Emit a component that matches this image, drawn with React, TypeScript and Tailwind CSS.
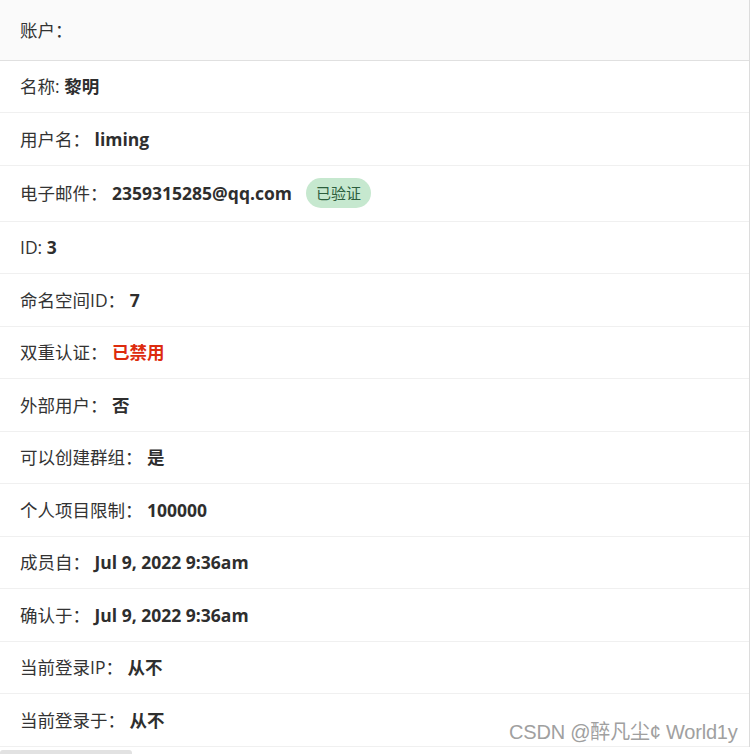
import React from "react";

const font = { fontFamily: '"Open Sans", "Noto Sans CJK SC", sans-serif' };

function Row({ label, children }: { label: string; children: React.ReactNode }) {
  return (
    <li className="flex items-center px-[20px] py-[12.625px] leading-[26.25px] border-b border-[#f0f0f0] text-[17.5px] text-[#333]">
      <span className="whitespace-pre">{label}</span>
      {children}
    </li>
  );
}

export default function App() {
  const v = "font-bold text-[#2e2e2e]";
  return (
    <div className="relative w-[751px] h-[754px] bg-white overflow-hidden" style={font}>
      <div className="w-[750px] border-r border-[#dcdcdc]">
        <div className="bg-[#fafafa] border-b border-[#e0e0e0] px-[20px] py-[16.625px] leading-[26.25px] text-[17.5px] text-[#333]">
          账户：
        </div>
        <ul>
          <Row label="名称: ">
            <span className={v}>黎明</span>
          </Row>
          <Row label="用户名： ">
            <span className={v}>liming</span>
          </Row>
          <li className="flex items-center px-[20px] py-[12.5px] border-b border-[#f0f0f0] text-[17.5px] text-[#333] leading-[26.25px]">
            <span className="whitespace-pre">电子邮件： </span>
            <span className={v}>2359315285@qq.com</span>
            <span className="ml-[14px] h-[30px] px-[10px] rounded-full bg-[#c6e8cf] text-[#2c5e3c] text-[15px] leading-[30px]">
              已验证
            </span>
          </li>
          <Row label="ID: ">
            <span className={v}>3</span>
          </Row>
          <Row label="命名空间ID： ">
            <span className={v}>7</span>
          </Row>
          <Row label="双重认证： ">
            <span className="font-bold text-[#dd2b0e]">已禁用</span>
          </Row>
          <Row label="外部用户： ">
            <span className={v}>否</span>
          </Row>
          <Row label="可以创建群组： ">
            <span className={v}>是</span>
          </Row>
          <Row label="个人项目限制： ">
            <span className={v}>100000</span>
          </Row>
          <Row label="成员自： ">
            <span className={v}>Jul 9, 2022 9:36am</span>
          </Row>
          <Row label="确认于： ">
            <span className={v}>Jul 9, 2022 9:36am</span>
          </Row>
          <Row label="当前登录IP： ">
            <span className={v}>从不</span>
          </Row>
          <Row label="当前登录于： ">
            <span className={v}>从不</span>
          </Row>
        </ul>
      </div>
      <div className="mt-[3px] w-[132px] h-[6px] rounded-full bg-[#e2e2e2]" />
      <div
        className="absolute left-[509px] top-[720px] text-[20px] leading-6 text-[#a0a0a0] tracking-[-0.2px]"
        style={{ fontFamily: '"Liberation Sans", "Noto Sans CJK SC", sans-serif' }}
      >
        CSDN @醉凡尘¢ World1y
      </div>
    </div>
  );
}
